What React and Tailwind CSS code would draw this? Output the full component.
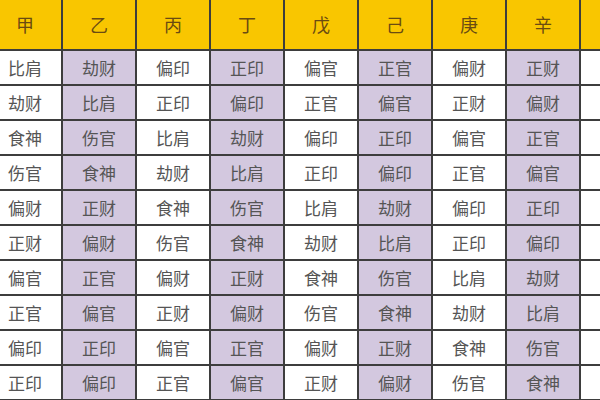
const stems = ['甲', '乙', '丙', '丁', '戊', '己', '庚', '辛', ''];

const rows = [
  ['比肩', '劫财', '偏印', '正印', '偏官', '正官', '偏财', '正财'],
  ['劫财', '比肩', '正印', '偏印', '正官', '偏官', '正财', '偏财'],
  ['食神', '伤官', '比肩', '劫财', '偏印', '正印', '偏官', '正官'],
  ['伤官', '食神', '劫财', '比肩', '正印', '偏印', '正官', '偏官'],
  ['偏财', '正财', '食神', '伤官', '比肩', '劫财', '偏印', '正印'],
  ['正财', '偏财', '伤官', '食神', '劫财', '比肩', '正印', '偏印'],
  ['偏官', '正官', '偏财', '正财', '食神', '伤官', '比肩', '劫财'],
  ['正官', '偏官', '正财', '偏财', '伤官', '食神', '劫财', '比肩'],
  ['偏印', '正印', '偏官', '正官', '偏财', '正财', '食神', '伤官'],
  ['正印', '偏印', '正官', '偏官', '正财', '偏财', '伤官', '食神'],
];

const font = { fontFamily: '"Noto Sans CJK SC", "Noto Sans", sans-serif' };

const App = () => {
  return (
    <div className="w-[600px] h-[400px] overflow-hidden bg-white" style={font}>
      <div className="ml-[-11px] w-max grid grid-cols-[repeat(9,72px)] grid-rows-[49px_repeat(10,33px)] gap-[2px] pb-[2px] bg-[#3d3d3d]">
        {/* header */}
        {stems.map((s, i) => (
          <div
            key={i}
            className="bg-[#f9c600] flex items-center justify-center text-[18px] text-[#6a4b12]"
          >
            {s}
          </div>
        ))}

        {/* body; the 9th column is cut off by the frame */}
        {rows.map((row, r) =>
          [...row, ''].map((cell, c) => (
            <div
              key={`${r}-${c}`}
              className={`flex items-center justify-center text-[17px] text-[#555555] ${
                c % 2 === 1 ? 'bg-[#d3c8df]' : 'bg-white'
              }`}
            >
              {cell}
            </div>
          ))
        )}
      </div>
    </div>
  );
};

export default App;
